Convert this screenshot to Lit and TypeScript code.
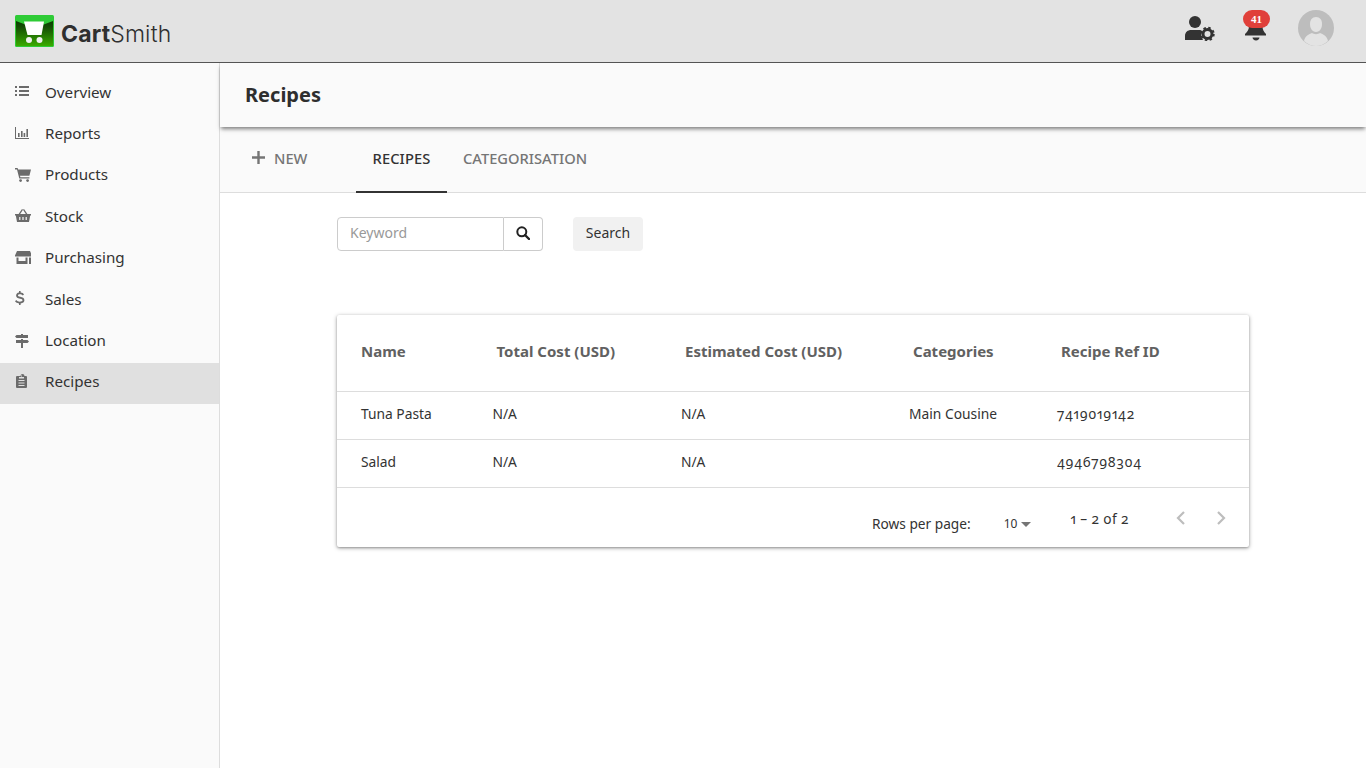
import { LitElement, html, css, svg } from "lit";
import { customElement } from "lit/decorators.js";

const I: Record<string, any> = {
  Overview: svg`<path d="M0 2h2v2H0zM4 2h10v2H4zM0 6h2v2H0zM4 6h10v2H4zM0 10h2v2H0zM4 10h10v2H4z"/>`,
  Reports: svg`<path d="M0 1h1v11h13v1H0zM3 7h1.6v4H3zM6 5h1.6v6H6zM8.6 7h1.6v4H8.6zM11.4 3H13v8h-1.6z"/>`,
  Products: svg`<path d="M0 1h2.6l.5 1.6H16l-1.6 6.2H5l.4 1.4h9v1.3H4.3L2 2.4H0z"/><circle cx="5.6" cy="13.6" r="1.4"/><circle cx="12.6" cy="13.6" r="1.4"/>`,
  Stock: svg`<path d="M0 6h3.6L7 1l1 .7L5.2 6h5.6L8 1.7 9 1l3.4 5H16v1.6h-.8L14 14H2L.8 7.6H0zM4.2 9v3h1.2V9zm3.2 0v3h1.2V9zm3.2 0v3h1.2V9z" fill-rule="evenodd"/>`,
  Purchasing: svg`<path d="M2 1h13l2 4.500v1H0v-1zM1.500 7.500h2V11h7V7.500h2V14h-11zM14 7.500h2V14h-2z"/>`,
  Sales: svg`<path d="M4 0h1.600v1.600C7.200 1.800 8.400 2.400 9 3.400L7.800 4.600C7 3.600 6 3.200 4.800 3.200 3.800 3.200 3 3.600 3 4.400c0 .7.6 1 2.200 1.400C7.600 6.300 9.400 7 9.400 9.300c0 1.800-1.500 2.900-3.800 3.100V14H4v-1.600c-1.800-.2-3.200-1-4-2.100l1.300-1.200c.8 1 2 1.600 3.400 1.600 1.300 0 2.800-.4 2.800-1.400 0-.8-.8-1.100-2.400-1.500C2.600 7.300 1.100 6.600 1.100 4.600 1.100 3 2.300 1.900 4 1.600z"/>`,
  Location: svg`<path d="M0 3.500 1.500 2H6V1h2v1h5v3H1.500zM1 7h5V6h2v1h4.500L14 8.500 12.500 10H8v5H6v-5H1z"/>`,
  Recipes: svg`<path d="M4 2h1.500a2 2 0 0 1 4 0H11a1 1 0 0 1 1 1v10a1 1 0 0 1-1 1H2a1 1 0 0 1-1-1V3a1 1 0 0 1 1-1zM3.500 6v1h6V6zm0 2.500v1h6v-1zm0 2.500v1h6v-1zM6 1.500v1h1v-1zM4 3v1.500h5V3z" fill-rule="evenodd"/>`,
};
const NAV = ["Overview", "Reports", "Products", "Stock", "Purchasing", "Sales", "Location", "Recipes"];
const ROWS = [
  ["Tuna Pasta", "N/A", "N/A", "Main Cousine", "7419019142"],
  ["Salad", "N/A", "N/A", "", "4946798304"],
];
const HEAD = ["Name", "Total Cost (USD)", "Estimated Cost (USD)", "Categories", "Recipe Ref ID"];

@customElement("app-root")
export class AppRoot extends LitElement {
  static styles = css`
    :host { display: block; width: 1366px; height: 768px; overflow: hidden; background: #fff;
      font-family: "Noto Sans", "Open Sans", sans-serif; color: #333; }
    * { box-sizing: border-box; }
    .top { height: 63px; background: #e3e3e3; border-bottom: 1px solid #555; display: flex; align-items: center; padding: 0 0 0 15px; }
    .logo { display: flex; align-items: center; gap: 7px; }
    .brand { font-family: "Inter", sans-serif; font-size: 23px; color: #2f2f2f; font-weight: 300; letter-spacing: .15px; padding-top: 6px; }
    .brand b { font-weight: 700; }
    .tools { margin-left: auto; display: flex; align-items: center; padding-bottom: 6px; }
    .tool { display: block; }
    .bell { position: relative; margin-left: 28px; width: 24px; height: 30px; }
    .badge { position: absolute; left: -1px; top: -3px; width: 27px; height: 18px; border-radius: 9px; background: #e0403a; color: #fff;
      font: 700 11px/18px "Liberation Serif", serif; text-align: center; }
    .avatar { margin: 0 32px 0 30px; }
    .body { display: flex; height: 705px; }
    .side { width: 220px; background: #fafafa; border-right: 1px solid #ddd; padding-top: 10px; flex: none; }
    .item { height: 41.400px; display: flex; align-items: center; padding: 0 0 4px 15px; font-size: 15.200px; color: #333; }
    .item.on { background: #e0e0e0; }
    .item svg { width: 16px; height: 16px; fill: #6b6b6b; flex: none; margin: 1px 14px 0 0; }
    .main { flex: 1; min-width: 0; }
    .title { height: 64px; background: #fafafa; box-shadow: 0 3px 4px -1px rgba(0,0,0,.5); position: relative; display: flex; align-items: center;
      padding: 0 0 2px 25px; font-size: 20px; font-weight: 700; color: #2e2e2e; }
    .tabs { height: 66px; background: #fafafa; border-bottom: 1px solid #ddd; display: flex; font-size: 14.700px; font-weight: 500; color: #757575; }
    .new { width: 136px; display: flex; align-items: center; padding: 0 0 4px 32px; gap: 9px; }
    .new svg { width: 13px; height: 13px; fill: #757575; flex: none; }
    .tab { display: flex; align-items: center; padding: 0 16px 2px; height: 66px; border-bottom: 2px solid transparent; }
    .tab.on { color: #333; border-bottom-color: #333; width: 91px; justify-content: center; padding: 0 0 2px; letter-spacing: .1px; }
    .content { padding: 24px 117px 0; }
    .search { display: flex; align-items: stretch; height: 34px; font-size: 14px; }
    .field { width: 167px; border: 1px solid #ccc; border-radius: 4px 0 0 4px; padding: 0 0 3px 12px; display: flex; align-items: center; color: #999; }
    .go { width: 39px; border: 1px solid #ccc; border-left: 0; border-radius: 0 4px 4px 0; display: flex; align-items: center; justify-content: center; padding-bottom: 2px; }
    .btn { margin-left: 30px; width: 70px; background: #f1f1f1; border-radius: 4px; display: flex; align-items: center; justify-content: center; color: #333; padding-bottom: 3px; }
    .card { margin-top: 64px; width: 912px; height: 232px; background: #fff; border-radius: 2px;
      box-shadow: 0 1px 4px rgba(0,0,0,.35), 0 1px 2px rgba(0,0,0,.2); }
    .grid { display: grid; grid-template-columns: 135.500px 188.500px 228px 148px 1fr; }
    .th { height: 77px; border-bottom: 1px solid #ddd; display: flex; align-items: center; font-size: 15px; font-weight: 700; color: #616161; padding: 0 0 5px 24px; }
    .td { height: 48px; border-bottom: 1px solid #ddd; display: flex; align-items: center; font-size: 13.800px; color: #333; padding: 0 0 4px 20px; }
    .td.first { padding-left: 24px; }
    .td.num { font-variant-numeric: oldstyle-nums proportional-nums; letter-spacing: .7px; }
    .foot { height: 58px; position: relative; display: flex; align-items: flex-start; font-size: 13.700px; color: #333; }
    .rpp { margin: 26px 0 0 535px; line-height: 20px; }
    .sel { margin: 27px 0 0 33px; font-size: 12px; line-height: 18px; display: flex; align-items: center; gap: 4px; }
    .caret { width: 0; height: 0; border: 5px solid transparent; border-top-color: #757575; border-bottom: 0; margin-top: 1px; }
    .range { margin: 21px 0 0 39px; line-height: 20px; font-variant-numeric: oldstyle-nums proportional-nums; letter-spacing: .4px; }
    .pg { margin: 20px 0 0 44px; display: flex; gap: 24px; }
    .pg svg { width: 16px; height: 20px; fill: none; stroke: #bdbdbd; stroke-width: 2.200; display: block; }
  `;

  render() {
    return html`
      <div class="top">
        <div class="logo">
          <svg width="39" height="32" viewBox="0 0 39 32">
            <defs><linearGradient id="g" x1="0" y1="0" x2="0" y2="1">
              <stop offset="0" stop-color="#0a3c00"/><stop offset=".25" stop-color="#144f04"/><stop offset="1" stop-color="#39ab00"/></linearGradient></defs>
            <rect width="39" height="32" rx="1.500" fill="#2ecb36"/>
            <path d="M1 6 19.500 13 38 6V31H1z" fill="url(#g)"/>
            <path d="M9 6.500H29L26.500 20H12.500z" fill="#fff"/>
            <circle cx="14" cy="25" r="3" fill="#f1f1f1"/><circle cx="24.500" cy="25" r="3" fill="#f1f1f1"/>
          </svg>
          <div class="brand"><b>Cart</b>Smith</div>
        </div>
        <div class="tools">
          <svg class="tool" width="32" height="26" viewBox="0 0 32 26" fill="#333">
            <circle cx="11" cy="7" r="6"/>
            <path d="M1 25v-4c0-4 3-6 6-6h8c1.500 0 2.500.5 3 1l-1 5 2 4z"/>
            <circle cx="23.500" cy="19" r="4.500" fill="none" stroke="#333" stroke-width="3"/>
            <circle cx="23.500" cy="19" r="6.300" fill="none" stroke="#333" stroke-width="1.800" stroke-dasharray="2.500 2.450"/>
          </svg>
          <div class="bell">
            <svg width="24" height="30" viewBox="0 0 24 30" fill="#333">
              <path d="M12 6c5 0 6.500 3.500 6.500 7 0 4 1.500 6 3.500 8v1.500H1V21c2-2 4-4 4-8 0-3.500 2-7 7-7z"/>
              <path d="M8.500 24.500h7c0 1.500-1.500 3-3.500 3s-3.500-1.500-3.500-3z"/>
            </svg>
            <span class="badge">41</span>
          </div>
          <svg class="avatar" width="36" height="36" viewBox="0 0 36 36">
            <circle cx="18" cy="18" r="18" fill="#bdbdbd"/>
            <path d="M18 7c4 0 6 3 6 7s-2 8-6 8-6-4-6-8 2-7 6-7z" fill="#e3e3e3"/>
            <path d="M6 31c1-5 5-7 8-8 2 1.500 6 1.500 8 0 3 1 7 3 8 8-3 3-8 5-12 5s-9-2-12-5z" fill="#e3e3e3"/>
          </svg>
        </div>
      </div>
      <div class="body">
        <nav class="side">
          ${NAV.map((n) => html`<div class="item ${n === "Recipes" ? "on" : ""}">
            <svg viewBox="0 0 16 16">${I[n]}</svg><span>${n}</span></div>`)}
        </nav>
        <div class="main">
          <div class="title">Recipes</div>
          <div class="tabs">
            <div class="new"><svg viewBox="0 0 13 13"><path d="M5.300 0h2.400v5.300H13v2.400H7.700V13H5.300V7.700H0V5.300h5.300z"/></svg>NEW</div>
            <div class="tab on">RECIPES</div>
            <div class="tab">CATEGORISATION</div>
          </div>
          <div class="content">
            <div class="search">
              <div class="field">Keyword</div>
              <div class="go"><svg width="14" height="14" viewBox="0 0 14 14"><circle cx="5.800" cy="5.800" r="4.500" fill="none" stroke="#222" stroke-width="2"/><path d="M9 9l4 4" stroke="#222" stroke-width="2.400" stroke-linecap="round"/></svg></div>
              <div class="btn">Search</div>
            </div>
            <div class="card">
              <div class="grid">
                ${HEAD.map((h) => html`<div class="th">${h}</div>`)}
                ${ROWS.map((r) => r.map((c, i) => html`<div class="td ${i === 0 ? "first" : ""} ${i === 4 ? "num" : ""}">${c}</div>`))}
              </div>
              <div class="foot">
                <span class="rpp">Rows per page:</span>
                <span class="sel">10 <i class="caret"></i></span>
                <span class="range">1 – 2 of 2</span>
                <div class="pg">
                  <svg viewBox="0 0 16 20"><path d="M11 4 5 10l6 6"/></svg>
                  <svg viewBox="0 0 16 20"><path d="M5 4l6 6-6 6"/></svg>
                </div>
              </div>
            </div>
          </div>
        </div>
      </div>
    `;
  }
}
